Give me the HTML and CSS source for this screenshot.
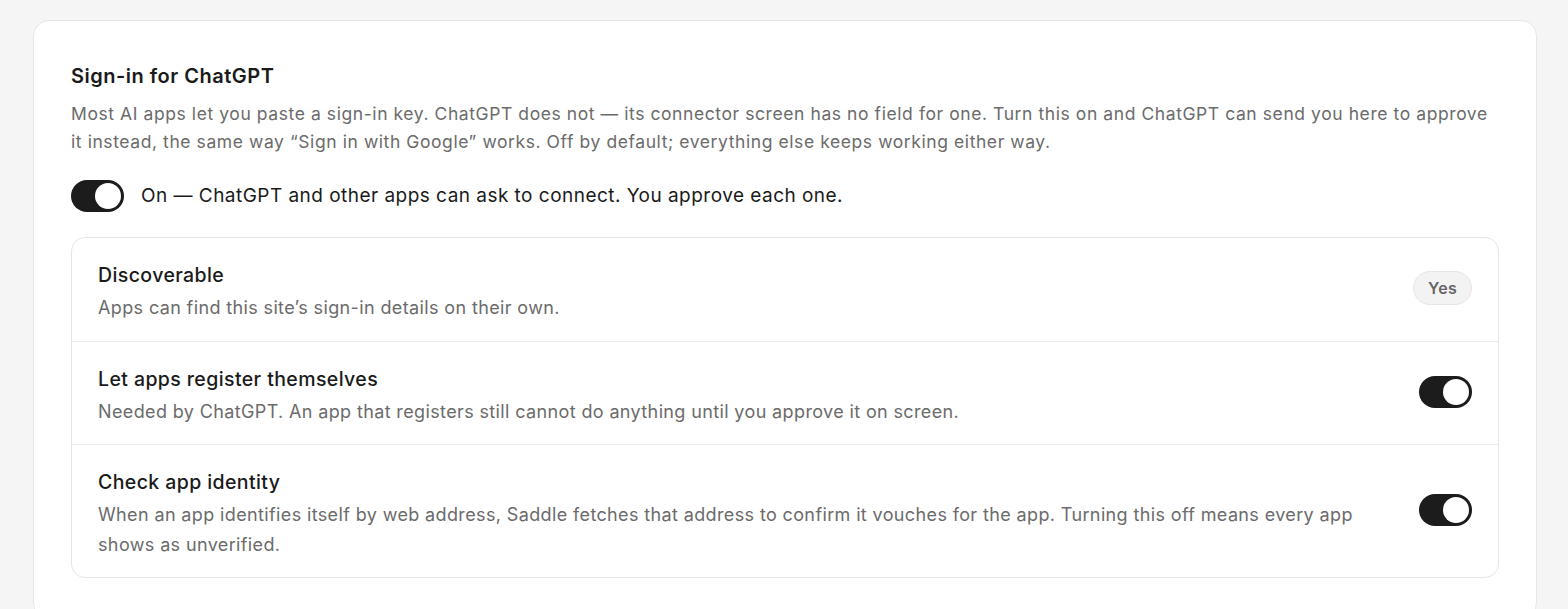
FILE: index.html
```html
<!DOCTYPE html>
<html lang="en">
<head>
<meta charset="utf-8">
<title>Sign-in for ChatGPT</title>
<link rel="stylesheet" href="styles.css">
</head>
<body>
<main class="page">
  <section class="card">
    <h2 class="card-title">Sign-in for ChatGPT</h2>
    <p class="card-desc">Most AI apps let you paste a sign-in key. ChatGPT does not — its connector screen has no field for one. Turn this on and ChatGPT can send you here to approve it instead, the same way “Sign in with Google” works. Off by default; everything else keeps working either way.</p>
    <div class="master">
      <span class="switch on" role="switch" aria-checked="true"><span class="knob"></span></span>
      <span class="master-label">On — ChatGPT and other apps can ask to connect. You approve each one.</span>
    </div>
    <div class="options">
      <div class="row">
        <div class="row-text">
          <div class="row-title">Discoverable</div>
          <div class="row-desc">Apps can find this site’s sign-in details on their own.</div>
        </div>
        <span class="pill row-control">Yes</span>
      </div>
      <div class="row">
        <div class="row-text">
          <div class="row-title">Let apps register themselves</div>
          <div class="row-desc">Needed by ChatGPT. An app that registers still cannot do anything until you approve it on screen.</div>
        </div>
        <span class="switch on row-control" role="switch" aria-checked="true"><span class="knob"></span></span>
      </div>
      <div class="row">
        <div class="row-text">
          <div class="row-title">Check app identity</div>
          <div class="row-desc">When an app identifies itself by web address, Saddle fetches that address to confirm it vouches for the app. Turning this off means every app shows as unverified.</div>
        </div>
        <span class="switch on row-control" role="switch" aria-checked="true"><span class="knob"></span></span>
      </div>
    </div>
  </section>
</main>
</body>
</html>
```

FILE: styles.css
```css
* { box-sizing: border-box; }
html, body { margin: 0; padding: 0; }
body {
  background: #f5f5f5;
  font-family: Inter, "Noto Sans", "Liberation Sans", sans-serif;
  color: #1a1a1a;
  height: 609px;
  overflow: hidden;
}
.page {
  padding: 20px 31px 0 33px;
}
.card {
  background: #ffffff;
  border: 1px solid #e6e6e6;
  border-radius: 16px;
  padding: 41px 37px 40px 37px;
}
.card-title {
  margin: 0;
  font-size: 20px;
  line-height: 28px;
  font-weight: 600;
  letter-spacing: 0.5px;
  color: #1a1a1a;
}
.card-desc {
  margin: 10px 0 0 0;
  font-size: 17.5px;
  line-height: 28px;
  letter-spacing: 0.58px;
  color: #6b6b6b;
}
.master {
  margin-top: 24px;
  display: flex;
  align-items: center;
  gap: 17px;
}
.master-label {
  font-size: 19px;
  line-height: 26px;
  letter-spacing: 0.47px;
  color: #1a1a1a;
}
.switch {
  flex: none;
  display: flex;
  align-items: center;
  width: 53px;
  height: 32px;
  border-radius: 16px;
  background: #1c1c1c;
  padding: 3px;
}
.switch.on { justify-content: flex-end; }
.knob {
  width: 26px;
  height: 26px;
  border-radius: 50%;
  background: #ffffff;
}
.options {
  margin-top: 25px;
  border: 1px solid #e6e6e6;
  border-radius: 14px;
}
.row {
  display: flex;
  align-items: center;
  justify-content: space-between;
  gap: 40px;
  padding: 23px 26px 18px 26px;
}
.row + .row { border-top: 1px solid #ebebeb; }
.row-text { flex: 1; min-width: 0; }
.row-control { margin-bottom: 7px; }
.row-title {
  font-size: 19.5px;
  line-height: 28px;
  font-weight: 500;
  letter-spacing: 0.4px;
  color: #1a1a1a;
}
.row-desc {
  margin-top: 4px;
  font-size: 18px;
  line-height: 29.5px;
  letter-spacing: 0.37px;
  color: #6b6b6b;
}
.pill {
  flex: none;
  display: inline-flex;
  align-items: center;
  justify-content: center;
  height: 34px;
  padding: 0 14px;
  border-radius: 17px;
  background: #f3f3f3;
  border: 1px solid #e6e6e6;
  font-size: 16px;
  font-weight: 600;
  letter-spacing: 0.3px;
  color: #666666;
}
```
